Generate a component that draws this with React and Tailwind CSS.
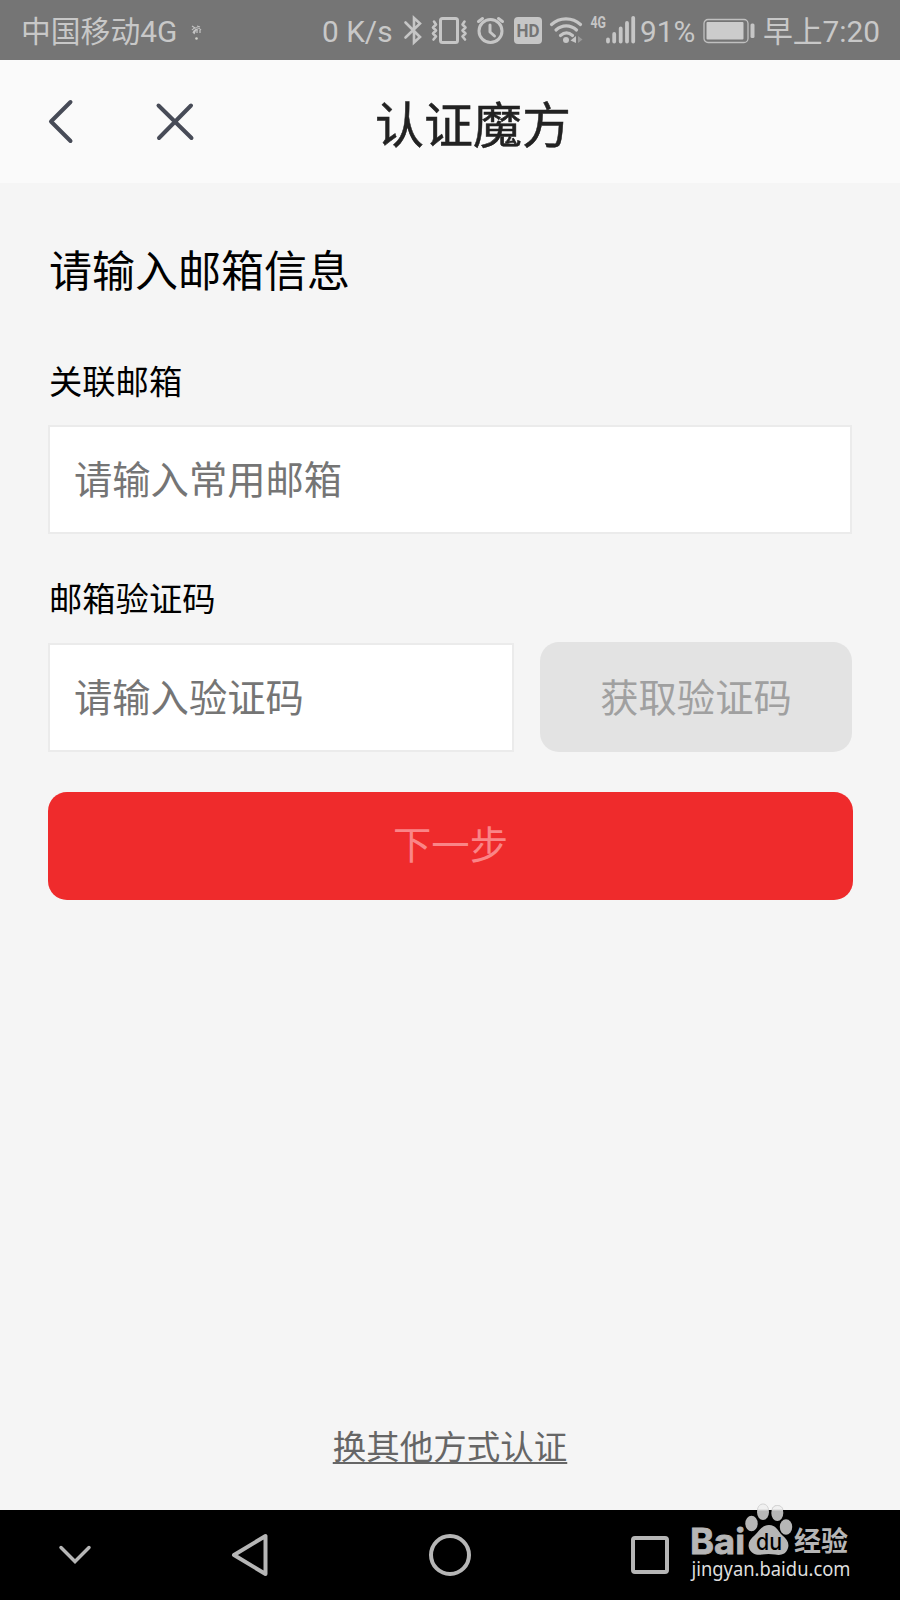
function Chevron() {
  return (
    <svg className="w-[26px] h-[46px]" viewBox="0 0 26 46" fill="none" stroke="#474b57" strokeWidth="4" strokeLinecap="round" strokeLinejoin="round">
      <path d="M22.500 3L3 22.500l19.500 19.500" />
    </svg>
  );
}

function Close() {
  return (
    <svg className="w-[40px] h-[40px]" viewBox="0 0 40 40" fill="none" stroke="#474b57" strokeWidth="4" strokeLinecap="round">
      <path d="M3.500 3.500l33 32.500M36 3.500L4 36" />
    </svg>
  );
}

function StatusIcons() {
  return (
    <svg className="w-[236px] h-[60px] shrink-0" viewBox="400 0 236 60" fill="none" stroke="#c6c6c6" strokeWidth="3" strokeLinecap="round" strokeLinejoin="round">
      {/* bluetooth */}
      <path strokeWidth="2.600" strokeLinejoin="miter" d="M405.500 22.500L420 37l-6 5.500V18l6 5.500-14.500 14" />
      {/* vibrate */}
      <rect x="440.500" y="18.500" width="17" height="24" rx="2" />
      <path strokeWidth="2.600" d="M434 21.500l2 3-3 3 3 3-3 3 3 3-2.500 3M464.500 21.500l-2 3 3 3-3 3 3 3-3 3 2.500 3" />
      {/* alarm */}
      <circle cx="490.500" cy="31" r="11.500" />
      <path d="M490 25v7l4.500 4" />
      <path d="M478.500 21.500l4-3M502.500 21.500l-4-3" />
      {/* hd */}
      <rect x="514" y="17" width="28" height="27" rx="4" fill="#c6c6c6" stroke="none" />
      <text x="528" y="37" textAnchor="middle" fill="#757575" stroke="none" fontFamily="Roboto, sans-serif" fontWeight="700" fontSize="17.500" textLength="23" lengthAdjust="spacingAndGlyphs">HD</text>
      {/* wifi */}
      <path strokeWidth="3.200" d="M551.500 24.500c8-7.500 21-7.500 29 0M556 30c6-5.500 14.500-5.500 20.500 0M560.500 35.500c4-3.500 8-3.500 12 0" />
      <circle cx="566" cy="40" r="3" fill="#c6c6c6" stroke="none" />
      <path d="M576 36v7l-5.500-2.500z" fill="#c6c6c6" stroke="none" />
      <path d="M578 36v7l4.500-3.500z" fill="#999" stroke="none" />
      {/* signal */}
      <text x="590.500" y="27.500" fill="#c6c6c6" stroke="none" fontFamily="Roboto, sans-serif" fontWeight="700" fontSize="16" textLength="15.500" lengthAdjust="spacingAndGlyphs">4G</text>
      <path strokeWidth="3.800" d="M608 39.500v2M614.200 34v7.500M620.700 28.500v13M627 23v18.500M633.200 17.800v23.700" />
    </svg>
  );
}

function Battery() {
  return (
    <svg className="w-[52px] h-[26px] mt-0.5 shrink-0" viewBox="0 0 52 26">
      <rect x="1" y="1.500" width="44" height="23" rx="4" fill="none" stroke="#c0c0c0" strokeWidth="1.300" />
      <rect x="3.500" y="4" width="37" height="17.500" rx="1" fill="#cccccc" />
      <rect x="47.500" y="5.500" width="4" height="14.500" rx="1.500" fill="#c6c6c6" />
    </svg>
  );
}

function StatusBar() {
  return (
    <div className="flex items-center h-[60px] bg-[#757575] text-[#c8c8c8] text-[29.8px] leading-[60px] whitespace-nowrap font-['Roboto','Noto_Sans_CJK_SC',sans-serif]">
      <span className="w-[169px] ml-[21px] pt-[3px]">中国移动4G</span>
      <svg className="w-3 h-5 mt-2 shrink-0" viewBox="0 0 12 20" fill="none" stroke="#c4c4c4" strokeWidth="1.200">
        <path d="M2 2l3 2M7 2l3 1M2 6c2-3 7-3 9 0M3 9c1-3 3-4 5-3M7 6v3M10 6v3M6 5l-2 5" />
        <circle cx="6.500" cy="14.500" r="1.300" fill="#d0d0c8" stroke="none" />
      </svg>
      <span className="w-[78px] ml-[120px] pt-[3px]">0 K/s</span>
      <StatusIcons />
      <span className="w-[63px] ml-1 pt-[3px]">91%</span>
      <Battery />
      <span className="ml-[8px] pt-[3px]">早上7:20</span>
    </div>
  );
}

function NavBar() {
  return (
    <nav className="relative flex items-center h-[90px] bg-black">
      <svg className="w-[34px] h-[22px] ml-[58px]" viewBox="0 0 34 22" fill="none" stroke="#b6b6b6" strokeWidth="3.500" strokeLinecap="round">
        <path d="M3 3.500l14 14 14-14" />
      </svg>
      <svg className="w-[38px] h-[44px] ml-[139px]" viewBox="0 0 38 44" fill="none" stroke="#b6b6b6" strokeWidth="4" strokeLinejoin="round">
        <path d="M3 22L34.500 3v38z" />
      </svg>
      <span className="w-[42px] h-[42px] ml-[160px] rounded-full border-4 border-[#b6b6b6]" />
      <span className="w-[38px] h-[38px] ml-[160px] rounded-[4px] border-4 border-[#b6b6b6]" />
      <Watermark />
    </nav>
  );
}

function Watermark() {
  return (
    <svg className="absolute right-[44px] bottom-[18px] w-[168px] h-[80px] overflow-visible" viewBox="688 1502 168 80" fill="#b6b6b6">
      <text x="690" y="1553.500" fontFamily="Inter, sans-serif" fontWeight="700" fontSize="35" stroke="#b6b6b6" strokeWidth="0.800" textLength="55" lengthAdjust="spacingAndGlyphs">Bai</text>
      <ellipse cx="751.500" cy="1523.500" rx="6.200" ry="7.800" />
      <ellipse cx="763" cy="1512" rx="6" ry="8" />
      <ellipse cx="777.300" cy="1513" rx="6" ry="8" />
      <ellipse cx="786" cy="1527" rx="6.200" ry="7.800" />
      {/* toes lighten where they rise over the page */}
      <path d="M757.500 1510c.5-8 10.500-8 11 0zM772 1510c.5-6 10.500-6 11 0z" fill="#f0f0f0" stroke="#d6d6d6" strokeWidth="1" />
      <path d="M769 1525c-7 0-10 6-14 10-5 4-7.500 8-6 13 2 6 8 7.500 13 6.500 4-.8 9-.8 13 0 5 1 11 .5 13-6.500 1.500-5-1-9-6-13-4-4-6-10-13-10z" />
      <text x="756" y="1550" fill="#000" fontFamily="Inter, sans-serif" fontWeight="500" fontSize="23" textLength="26" lengthAdjust="spacingAndGlyphs">du</text>
      <text x="794" y="1551" fontFamily="'Noto Sans CJK SC', sans-serif" fontWeight="700" fontSize="27" textLength="54" lengthAdjust="spacingAndGlyphs">经验</text>
      <text x="691.500" y="1575.500" fill="#dedede" fontFamily="'Noto Sans', sans-serif" fontSize="20" textLength="159" lengthAdjust="spacingAndGlyphs">jingyan.baidu.com</text>
    </svg>
  );
}

export default function App() {
  return (
    <div className="flex flex-col w-[900px] h-[1600px] overflow-hidden bg-[#f5f5f5] text-black font-['Noto_Sans_CJK_SC',sans-serif]">
      <StatusBar />

      {/* Header */}
      <header className="flex items-center h-[123px] bg-[#fafafa]">
        <div className="ml-[48px]"><Chevron /></div>
        <div className="ml-[81px]"><Close /></div>
        <h1 className="ml-[180px] text-[49px] leading-[60px] font-normal text-[#222] [-webkit-text-stroke:0.5px_#222]">认证魔方</h1>
      </header>

      {/* Form */}
      <main className="flex flex-col flex-1 px-12">
        <h2 className="mt-[55px] ml-px text-[43px] leading-[60px]">请输入邮箱信息</h2>

        <label className="mt-[62px] ml-px text-[33.3px] leading-10">关联邮箱</label>
        <input
          className="mt-[25px] w-[804px] h-[109px] px-6 pb-1 border-2 border-[#ebebeb] bg-white text-[38.3px] placeholder:text-[#757575]"
          placeholder="请输入常用邮箱"
        />

        <label className="mt-[43px] ml-px text-[33.3px] leading-10">邮箱验证码</label>
        <div className="flex mt-[25px] gap-[26px]">
          <input
            className="w-[466px] h-[109px] mt-px px-6 pb-1 border-2 border-[#ebebeb] bg-white text-[38.3px] placeholder:text-[#757575]"
            placeholder="请输入验证码"
          />
          <button className="w-[313px] h-[110px] pb-[3px] rounded-[19px] bg-[#e3e3e3] text-[38.3px] text-[#a0a0a0]">获取验证码</button>
        </div>

        <button className="mt-10 w-[805px] h-[108px] pb-[6px] rounded-[19px] bg-[#ef2b2c] text-[38.3px] text-[#fa8587]">下一步</button>

        <a className="mt-auto mb-[45px] self-center text-[33.5px] leading-10 text-[#666] underline decoration-2 underline-offset-3">换其他方式认证</a>
      </main>

      <NavBar />
    </div>
  );
}
